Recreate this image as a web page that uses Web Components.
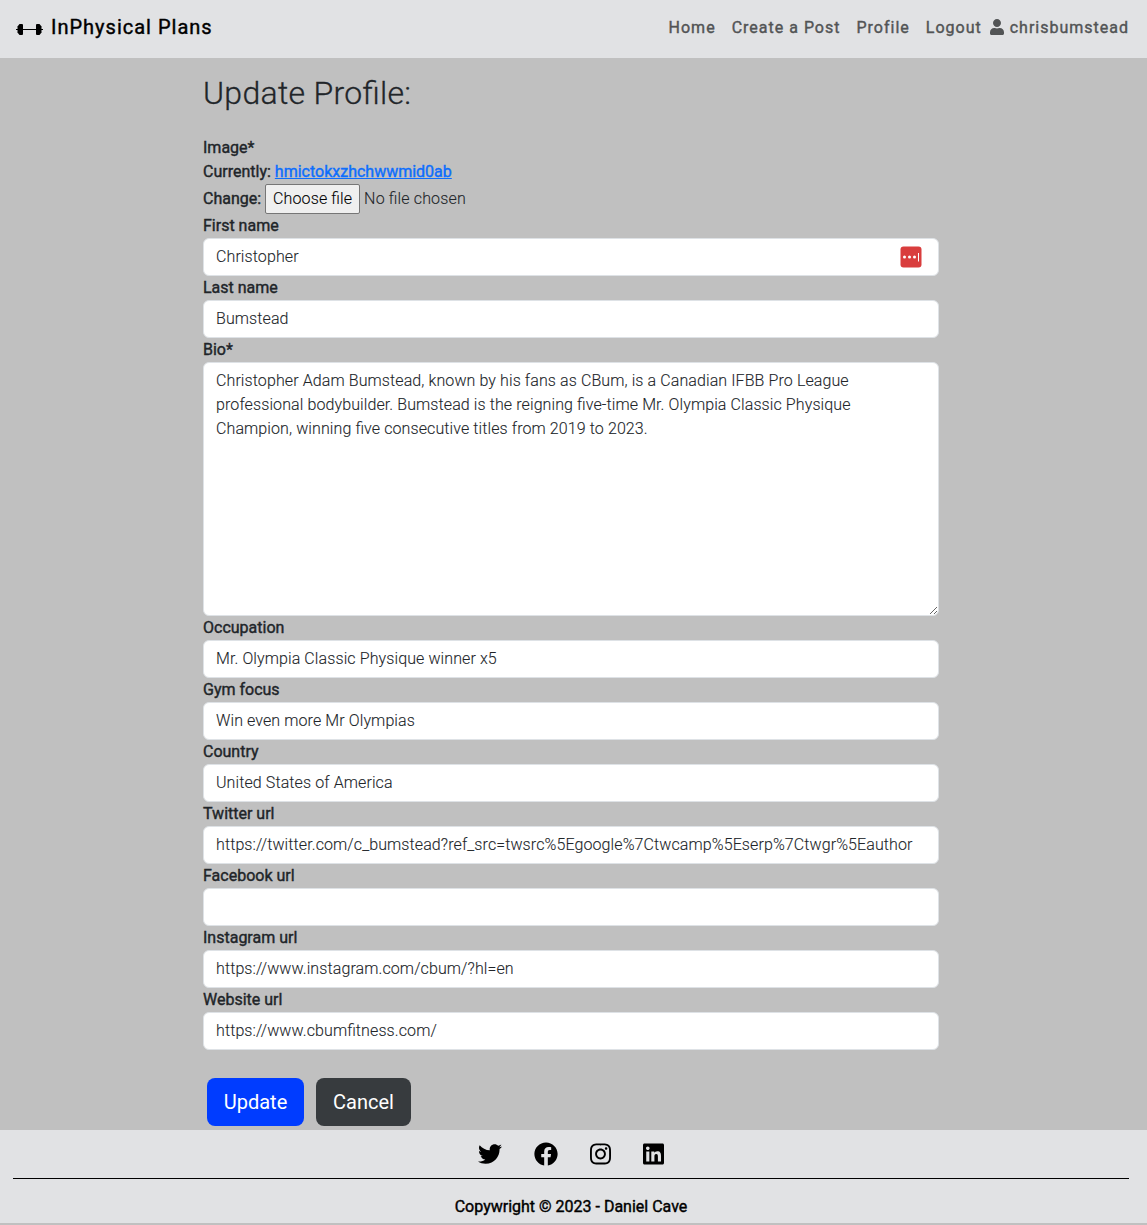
<!DOCTYPE html>
<html lang="en">
<head>
<meta charset="utf-8">
<title>InPhysical Plans</title>
<style>
body{margin:0;background:#c0c0c0;font:400 16px/24px Roboto,sans-serif;color:#212529}
</style>
</head>
<body>
<profile-page></profile-page>
<script>
const define = (name, html, setup) => customElements.define(name, class extends HTMLElement {
  connectedCallback() {
    if (this.shadowRoot) return;
    const t = document.createElement('template');
    t.innerHTML = typeof html === 'function' ? html(this) : html;
    this.attachShadow({mode: 'open'}).append(t.content.cloneNode(true));
    if (setup) setup(this);
  }
});

const icons = {
  user: [448, 'M224 256c70.7 0 128-57.3 128-128S294.7 0 224 0 96 57.3 96 128s57.3 128 128 128zm89.6 32h-16.7c-22.2 10.2-46.9 16-72.9 16s-50.6-5.8-72.9-16h-16.7C60.2 288 0 348.2 0 422.4V464c0 26.5 21.5 48 48 48h352c26.5 0 48-21.5 48-48v-41.6c0-74.2-60.2-134.4-134.4-134.4z'],
  twitter: [512, 'M459.37 151.716c.325 4.548.325 9.097.325 13.645 0 138.72-105.583 298.558-298.558 298.558-59.452 0-114.68-17.219-161.137-47.106 8.447.974 16.568 1.299 25.34 1.299 49.055 0 94.213-16.568 130.274-44.832-46.132-.975-84.792-31.188-98.112-72.772 6.498.974 12.995 1.624 19.818 1.624 9.421 0 18.843-1.3 27.614-3.573-48.081-9.747-84.143-51.98-84.143-102.985v-1.299c13.969 7.797 30.214 12.67 47.431 13.319-28.264-18.843-46.781-51.005-46.781-87.391 0-19.492 5.197-37.36 14.294-52.954 51.655 63.675 129.3 105.258 216.365 109.807-1.624-7.797-2.599-15.918-2.599-24.04 0-57.828 46.782-104.934 104.934-104.934 30.213 0 57.502 12.67 76.67 33.137 23.715-4.548 46.456-13.32 66.599-25.34-7.798 24.366-24.366 44.833-46.132 57.827 21.117-2.273 41.584-8.122 60.426-16.243-14.292 20.791-32.161 39.308-52.628 54.253z'],
  facebook: [512, 'M504 256C504 119 393 8 256 8S8 119 8 256c0 123.78 90.69 226.38 209.25 245V327.69h-63V256h63v-54.64c0-62.15 37-96.48 93.67-96.48 27.14 0 55.52 4.84 55.52 4.84v61h-31.28c-30.8 0-40.41 19.12-40.41 38.73V256h68.78l-11 71.69h-57.78V501C413.31 482.38 504 379.78 504 256z'],
  instagram: [448, 'M224.1 141c-63.6 0-114.9 51.3-114.9 114.9s51.3 114.9 114.9 114.9S339 319.5 339 255.9 287.7 141 224.1 141zm0 189.6c-41.1 0-74.7-33.5-74.7-74.7s33.5-74.7 74.7-74.7 74.7 33.5 74.7 74.7-33.6 74.7-74.7 74.7zm146.4-194.3c0 14.9-12 26.8-26.8 26.8-14.9 0-26.8-12-26.8-26.8s12-26.8 26.8-26.8 26.8 12 26.8 26.8zm76.1 27.2c-1.7-35.9-9.9-67.7-36.2-93.9-26.2-26.2-58-34.4-93.9-36.2-37-2.1-147.9-2.1-184.9 0-35.8 1.7-67.6 9.9-93.9 36.1s-34.4 58-36.2 93.9c-2.1 37-2.1 147.9 0 184.9 1.7 35.9 9.9 67.7 36.2 93.9s58 34.4 93.9 36.2c37 2.1 147.9 2.1 184.9 0 35.9-1.7 67.7-9.9 93.9-36.2 26.2-26.2 34.4-58 36.2-93.9 2.1-37 2.1-147.8 0-184.8zM398.8 388c-7.8 19.6-22.9 34.7-42.6 42.6-29.5 11.7-99.5 9-132.1 9s-102.7 2.6-132.1-9c-19.6-7.8-34.7-22.9-42.6-42.6-11.7-29.5-9-99.5-9-132.1s-2.6-102.7 9-132.1c7.8-19.6 22.9-34.7 42.6-42.6 29.5-11.7 99.5-9 132.1-9s102.7-2.6 132.1 9c19.6 7.8 34.7 22.9 42.6 42.6 11.7 29.5 9 99.5 9 132.1s2.7 102.7-9 132.1z'],
  linkedin: [448, 'M416 32H31.9C14.3 32 0 46.5 0 64.3v383.4C0 465.5 14.3 480 31.9 480H416c17.6 0 32-14.5 32-32.3V64.3c0-17.8-14.4-32.3-32-32.3zM135.4 416H69V202.2h66.5V416zm-33.2-243c-21.3 0-38.5-17.3-38.5-38.5S80.9 96 102.2 96c21.2 0 38.5 17.3 38.5 38.5 0 21.3-17.2 38.5-38.5 38.5zm282.1 243h-66.4V312c0-24.8-.5-56.7-34.5-56.7-34.6 0-39.9 27-39.9 54.9V416h-66.4V202.2h63.7v29.2h.9c8.9-16.8 30.6-34.5 62.9-34.5 67.2 0 79.7 44.3 79.7 101.9V416z']
};
define('fa-icon', el => {
  const [w, d] = icons[el.getAttribute('name')];
  return `<style>:host{display:block;height:var(--size,24px)}svg{display:block;height:100%;width:calc(var(--size,24px)*${w / 512})}</style>
  <svg viewBox="0 0 ${w} 512" fill="currentColor"><path d="${d}"/></svg>`;
});

define('site-nav', `<style>
:host{display:flex;justify-content:space-between;height:58px;box-sizing:border-box;padding:0 18px 4px 16px;background:#e1e2e4;letter-spacing:1px;align-items:center}
.brand{display:flex;align-items:center;font-size:20px;color:#000;-webkit-text-stroke:.4px currentColor}
.brand svg{margin:5px 8px 0 0}
nav{display:flex;gap:16px;color:#525455;padding-top:2px;-webkit-text-stroke:.4px currentColor}
.out{display:flex;align-items:center;gap:8px}
.who{display:flex;align-items:center;gap:6px}
fa-icon{--size:16px;margin-top:-2px}
</style>
<div class="brand"><svg width="27" height="12" viewBox="0 0 27 12"><rect y="5" width="27" height="1"/><path d="M3.500 0H6q1 0 1 1v9q0 1-1 1H3.500L1.500 8.500V2.500z"/><path d="M23.500 0H21q-1 0-1 1v9q0 1 1 1h2.500l2-2.500V2.500z"/></svg><span>InPhysical Plans</span></div>
<nav><span>Home</span><span>Create a Post</span><span>Profile</span><div class="out"><span>Logout</span><div class="who"><fa-icon name="user"></fa-icon><span>chrisbumstead</span></div></div></nav>`);

define('field-label', `<style>:host{display:block;-webkit-text-stroke:.4px currentColor}</style><slot></slot>`);

define('form-field', `<style>
:host{display:block}
.box{display:flex;position:relative}
input,textarea{display:block;width:100%;box-sizing:border-box;margin:0;padding:5px 12px 7px;border:1px solid #dee2e6;border-radius:6px;background:#fff;color:#212529;font:inherit;font-weight:300;letter-spacing:.1px;font-feature-settings:"liga";-webkit-text-stroke:.1px currentColor;line-height:24px;height:38px;outline:0}
textarea{height:254px;padding:6px 20px 6px 12px;overflow:auto}
slot[name=badge]{display:block;position:absolute;right:17px;top:8px}
</style>
<field-label></field-label><div class="box"><slot name="badge"></slot></div>`, el => {
  const root = el.shadowRoot;
  root.querySelector('field-label').textContent = el.getAttribute('label');
  const c = document.createElement(el.hasAttribute('multiline') ? 'textarea' : 'input');
  c.spellcheck = false;
  c.value = el.getAttribute('value') || '';
  root.querySelector('.box').prepend(c);
});

define('key-badge', `<style>:host{display:block}svg{display:block}</style>
<svg width="22" height="22" viewBox="0 0 22 22"><rect x=".5" y=".5" width="21" height="21" rx="3" fill="#d93d3d"/><g fill="#fff"><circle cx="4.500" cy="11" r="1.500"/><circle cx="9.500" cy="11" r="1.500"/><circle cx="14.500" cy="11" r="1.500"/><rect x="18" y="7" width="1" height="8.500"/></g></svg>`);

define('file-field', `<style>
:host{display:block}
.row{display:flex;gap:4px;align-items:center;height:24px}
.file{height:30px;gap:4px}
a{color:#0d6efd;text-decoration:underline}
.link{color:#0d6efd}
.file span,button{font-weight:300;letter-spacing:.15px;font-feature-settings:"liga";-webkit-text-stroke:.1px currentColor}
button{font-family:inherit;font-size:inherit;line-height:inherit;color:#000;background:#efefef;border:1px solid #767676;border-radius:2px;height:30px;width:95px;padding:0;box-sizing:border-box;white-space:nowrap}
</style>
<field-label>Image*</field-label>
<div class="row"><field-label>Currently:</field-label><field-label class="link"><a>hmictokxzhchwwmid0ab</a></field-label></div>
<div class="row file"><field-label>Change:</field-label><button type="button">Choose file</button><span>No file chosen</span></div>`);

define('action-button', `<style>
:host{display:block}
button{display:block;font:400 20px/30px Roboto,sans-serif;color:#fff;background:var(--bg);border:0;border-radius:8px;padding:9px 0;width:var(--w);height:48px}
</style><button type="button"><slot></slot></button>`);

define('site-footer', `<style>
:host{display:block;height:93px;background:#e1e2e4;color:#000;box-sizing:border-box;padding:12px 18px 0 13px}
.social{display:flex;gap:32px;justify-content:center;height:36px}
hr{margin:0;border:0;height:1px;background:#000}
.copy{margin-top:16px;text-align:center}
</style>
<div class="social"><fa-icon name="twitter"></fa-icon><fa-icon name="facebook"></fa-icon><fa-icon name="instagram"></fa-icon><fa-icon name="linkedin"></fa-icon></div>
<hr><field-label class="copy">Copywright © 2023 - Daniel Cave</field-label>`);

define('profile-page', `<style>
:host{display:block}
main{width:736px;margin-left:203px;height:1072px;display:flex;flex-direction:column}
h1{margin:16px 0 24px;font-size:32px;line-height:38px;font-weight:300;letter-spacing:.3px;font-feature-settings:"liga";-webkit-text-stroke:.3px currentColor}
.actions{display:flex;gap:12px;margin:28px 0 0 4px}
</style>
<site-nav></site-nav>
<main>
<h1>Update Profile:</h1>
<file-field></file-field>
<form-field label="First name" value="Christopher"><key-badge slot="badge"></key-badge></form-field>
<form-field label="Last name" value="Bumstead"></form-field>
<form-field label="Bio*" multiline value="Christopher Adam Bumstead, known by his fans as CBum, is a Canadian IFBB Pro League professional bodybuilder. Bumstead is the reigning five-time Mr. Olympia Classic Physique Champion, winning five consecutive titles from 2019 to 2023."></form-field>
<form-field label="Occupation" value="Mr. Olympia Classic Physique winner x5"></form-field>
<form-field label="Gym focus" value="Win even more Mr Olympias"></form-field>
<form-field label="Country" value="United States of America"></form-field>
<form-field label="Twitter url" value="https://twitter.com/c_bumstead?ref_src=twsrc%5Egoogle%7Ctwcamp%5Eserp%7Ctwgr%5Eauthor"></form-field>
<form-field label="Facebook url"></form-field>
<form-field label="Instagram url" value="https://www.instagram.com/cbum/?hl=en"></form-field>
<form-field label="Website url" value="https://www.cbumfitness.com/"></form-field>
<div class="actions"><action-button style="--bg:#003cff;--w:97px">Update</action-button><action-button style="--bg:#373b3e;--w:95px">Cancel</action-button></div>
</main>
<site-footer></site-footer>`);
</script>
</body>
</html>
